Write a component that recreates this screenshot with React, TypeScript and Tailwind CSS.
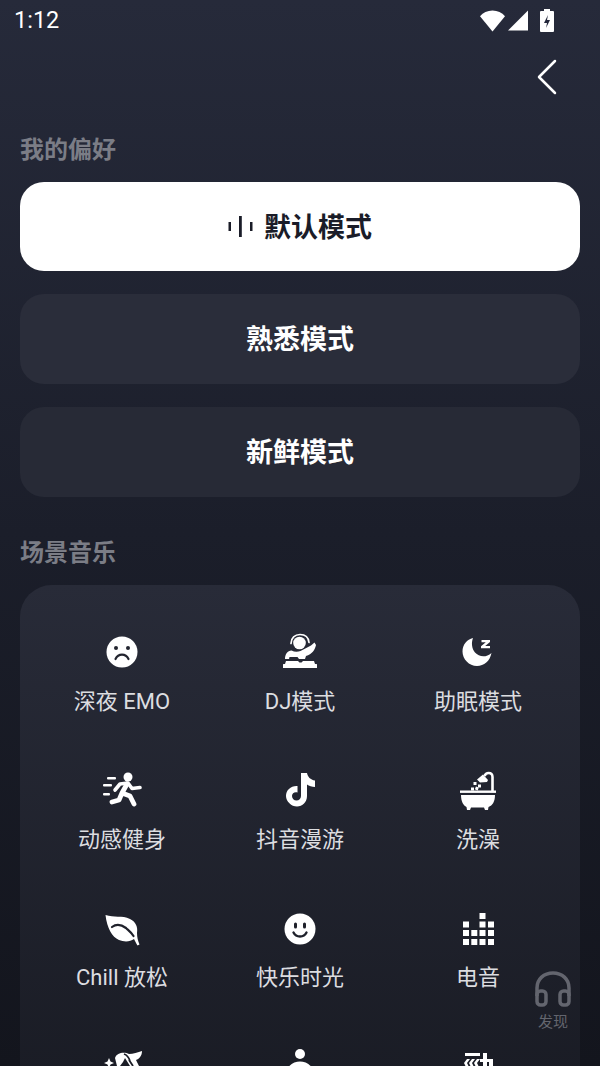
import type { ReactNode } from "react";

const cjk = "font-['Roboto','Noto_Sans_CJK_SC',sans-serif]";

function Sad() {
  return (
    <svg width="44" height="44" viewBox="0 0 44 44">
      <circle cx="22" cy="22" r="15.500" fill="#fff" />
      <circle cx="16" cy="18" r="2" fill="#22242f" />
      <circle cx="28" cy="18" r="2" fill="#22242f" />
      <path d="M15.500 29c1.500-3 4-4.300 6.500-4.300s5 1.300 6.500 4.300" fill="none" stroke="#22242f" strokeWidth="2.200" strokeLinecap="round" />
    </svg>
  );
}

function Dj() {
  return (
    <svg width="44" height="44" viewBox="0 0 44 44" fill="#fff">
      <path d="M13 13.500C13 8 17 4.500 22 4.500s8.500 3 9 8" fill="none" stroke="#fff" strokeWidth="1.700" strokeLinecap="round" />
      <circle cx="21.500" cy="13" r="6.300" />
      <path d="M7 29c0-5 2.500-8 6.500-8.500 3 1.500 6 1.500 9 .5L33 15.500l3.500-3 1.500 2.500c-1 5-4 9-10 11l-1 3h-6l-1.500-2h-8l-.5 2z" />
      <path d="M8 31h12l1.500 1.500h2L25 31h11l1 3H7z" />
      <rect x="5" y="34" width="34" height="4" rx=".5" />
    </svg>
  );
}

function Moon() {
  return (
    <svg width="44" height="44" viewBox="0 0 44 44" fill="#fff">
      <path d="M17 8C15 13 16 19 19 22.500 23 27 30 28 35.500 23 34 31 28 36 21 36 13 36 6.500 29 6.500 21.500 6.500 14.500 11 9.500 17 8z" />
      <path d="M25.500 10h8.500v2l-4.800 4h4.800v2.300h-9v-2l4.800-4h-4.300z" />
    </svg>
  );
}

function Runner() {
  return (
    <svg width="44" height="44" viewBox="0 0 44 44" fill="#fff">
      <circle cx="28" cy="9" r="4.500" />
      <path d="M15 22l5-6 8-1 4 5.500 8-1" fill="none" stroke="#fff" strokeWidth="3.600" strokeLinecap="round" strokeLinejoin="round" />
      <path d="M27 16l-5 9 8 3 4 8M22 25l-3 7-7 2" fill="none" stroke="#fff" strokeWidth="4.800" strokeLinecap="round" strokeLinejoin="round" />
      <rect x="7" y="9" width="9" height="2.500" rx="1" />
      <rect x="3" y="16" width="9" height="2.500" rx="1" />
      <rect x="3" y="25" width="7" height="2.500" rx="1" />
    </svg>
  );
}

function Tiktok() {
  return (
    <svg width="44" height="44" viewBox="0 0 44 44" fill="#fff">
      <path d="M23 5h6c.5 3.500 3.500 7 8 7.500V19c-3 0-6-1-8-2.500v11.500c0 6-4.500 10.500-10 10.500S8 33.500 8 28c0-6 5-10.500 11.500-10v6.500c-3-1-5.500 1-5.500 3.500 0 2.500 2 4.500 4.500 4.500S23 30.500 23 28z" />
    </svg>
  );
}

function Bath() {
  return (
    <svg width="44" height="44" viewBox="0 0 44 44" fill="#fff">
      <path d="M36.500 23V9c0-2.800-1.500-4-3.800-4-2 0-3.500 1-4.200 3" fill="none" stroke="#fff" strokeWidth="2.600" />
      <path d="M21 11.500l6-5 5 5.500-1 2-7 .5z" />
      <rect x="22" y="16.500" width="3" height="3" />
      <rect x="17.500" y="14" width="3" height="3" />
      <rect x="19.500" y="19" width="3" height="3" transform="rotate(20 21 20)" />
      <rect x="15" y="19.500" width="3" height="3" />
      <rect x="4" y="22.500" width="36" height="2.400" />
      <path d="M5 27h34c0 6.500-2.500 10.500-6.500 12l-.5 3h-3l-1-2.500H15L14 42h-3l-.5-3C7.500 37.500 5 33.500 5 27z" />
    </svg>
  );
}

function Leaf() {
  return (
    <svg width="44" height="44" viewBox="0 0 44 44">
      <path d="M5.500 9C14 12 22 9 30 13c6 3 8 8 7 14 0 4 1 8 2.500 11.500l-2 1c-1.500-2.500-2.500-4.500-3.500-6.500-4 3-10 3-15 1C12 31 7 22 5.500 9z" fill="#fff" />
      <path d="M12 21c5-4 10-2 14 1 2 2 5 4 7.500 8" fill="none" stroke="#1f212b" strokeWidth="2.200" strokeLinecap="round" />
    </svg>
  );
}

function Smile() {
  return (
    <svg width="44" height="44" viewBox="0 0 44 44">
      <circle cx="22" cy="23" r="15.500" fill="#fff" />
      <rect x="16" y="16.500" width="3" height="6" rx="1.500" fill="#1f212b" />
      <rect x="25" y="16.500" width="3" height="6" rx="1.500" fill="#1f212b" />
      <path d="M15.500 26.500c1.500 3 4 4 6.500 4s5-1 6.500-4" fill="none" stroke="#1f212b" strokeWidth="2.400" strokeLinecap="round" />
    </svg>
  );
}

function Equalizer() {
  const cells: [number, number][] = [
    [23.500, 7],
    [7, 15.500], [23.500, 15.500], [32, 15.500],
    [7, 24], [15.300, 24], [23.500, 24], [32, 24],
    [7, 33], [15.300, 33], [23.500, 33], [32, 33],
  ];
  return (
    <svg width="44" height="44" viewBox="0 0 44 44" fill="#fff">
      {cells.map(([x, y]) => (
        <rect key={`${x}-${y}`} x={x} y={y} width="6" height="6" />
      ))}
    </svg>
  );
}

function Fairy() {
  return (
    <svg width="44" height="44" viewBox="0 0 44 44">
      <path d="M9 14l1.500 3.500L14 19l-3.500 1.500L9 24l-1.500-3.500L4 19l3.500-1.500z" fill="#fff" />
      <path d="M15 14c2-6 10-6 14-4 4 0 9-2 13-3 0 5-3 8-6 9l3 6H30l-5-8-2 4-3 4h-3z" fill="#fff" />
      <path d="M24 10c3 1 5 4 6 7M29 16l4 6" fill="none" stroke="#1c1e27" strokeWidth="1.800" />
    </svg>
  );
}

function Person() {
  return (
    <svg width="44" height="44" viewBox="0 0 44 44" fill="#fff">
      <circle cx="22" cy="10" r="5" />
      <path d="M8 30c1-9 8-12.500 14-12.500S35 21 36 30z" />
    </svg>
  );
}

function Blend() {
  return (
    <svg width="44" height="44" viewBox="0 0 44 44" fill="#fff">
      <rect x="9" y="9" width="15" height="3" />
      <path d="M11 15h3l-3 4 2 4h-3l-2-4zM16 15h3l-3 4 2 4h-3l-2-4zM21 15h3l-3 4 2 4h-3l-2-4z" />
      <path d="M27 9h4v6h6v16h-4V18h-2v12h-4V18h-3v-3h3z" />
    </svg>
  );
}

function Cell({ icon, label }: { icon: ReactNode; label: string }) {
  return (
    <div className="flex h-[138px] flex-col items-center">
      {icon}
      <span className="mt-[13px] h-[30px] text-[22px] leading-[30px] text-[#dcdde0] whitespace-nowrap">{label}</span>
    </div>
  );
}

export default function App() {
  return (
    <div className={`relative h-[1066px] w-[600px] overflow-hidden bg-gradient-to-b from-[#262a3a] via-[#1b1e2a] via-50% to-[#13151d] ${cjk}`}>
      {/* status bar */}
      <div className="flex h-[37px] items-center justify-between pl-[14px] pr-[46px] pt-[4px] text-white">
        <span className="text-[23.500px] leading-none">1:12</span>
        <div className="flex items-center">
          <svg width="25" height="24" viewBox="0 0 24 22" fill="#fff">
            <path d="M12 21L0 6.500C3 3 7 1 12 1s9 2 12 5.500z" />
          </svg>
          <svg width="20" height="23" viewBox="0 0 20 22" fill="#fff" className="ml-[3px]">
            <path d="M20 1v20H0z" />
          </svg>
          <svg width="14" height="25" viewBox="0 0 14 23" className="ml-[12px]">
            <path d="M4 0h6v2h3a1 1 0 0 1 1 1v19a1 1 0 0 1-1 1H1a1 1 0 0 1-1-1V3a1 1 0 0 1 1-1h3z" fill="#fff" />
            <path d="M8 6l-4 8h3l-1 5 4-8H7z" fill="#22263a" />
          </svg>
        </div>
      </div>

      {/* back */}
      <div className="flex h-[97px] justify-end pr-[43px]">
        <svg width="20" height="36" viewBox="0 0 20 36" className="mt-[22px]" fill="none" stroke="#fff" strokeWidth="2.500" strokeLinecap="round" strokeLinejoin="round">
          <path d="M18 2L2 18l16 16" />
        </svg>
      </div>

      <div className="px-[20px]">
        <h2 className="text-[24px] font-bold leading-[32px] text-[#7b7d86]">我的偏好</h2>
        <div className="mt-[16px] flex flex-col gap-[23px]">
          <button className="flex h-[89px] w-full items-center justify-center gap-[11px] rounded-[24px] bg-white text-[#1a1c28]">
            <svg width="25" height="24" viewBox="0 0 25 24" fill="#1a1c28">
              <rect x="0.500" y="7" width="2.500" height="9" />
              <rect x="11" y="1" width="2.800" height="21" />
              <rect x="22" y="7" width="2.500" height="9" />
            </svg>
            <span className="pt-[3px] text-[27px] font-bold leading-none">默认模式</span>
          </button>
          <button className="flex h-[90px] w-full items-center justify-center rounded-[24px] bg-[#2a2d3a] text-white">
            <span className="pt-[3px] text-[27px] font-bold leading-none">熟悉模式</span>
          </button>
          <button className="flex h-[90px] w-full items-center justify-center rounded-[24px] bg-[#272a36] text-white">
            <span className="pt-[3px] text-[27px] font-bold leading-none">新鲜模式</span>
          </button>
        </div>

        <h2 className="mt-[40px] text-[24px] font-bold leading-[32px] text-[#7b7d86]">场景音乐</h2>
        <div className="mt-[16px] h-[600px] rounded-[32px] bg-gradient-to-b from-[#282b38] to-[#171921] pt-[45px]">
          <div className="grid grid-cols-3 px-[13px]">
            <Cell icon={<Sad />} label="深夜 EMO" />
            <Cell icon={<Dj />} label="DJ模式" />
            <Cell icon={<Moon />} label="助眠模式" />
            <Cell icon={<Runner />} label="动感健身" />
            <Cell icon={<Tiktok />} label="抖音漫游" />
            <Cell icon={<Bath />} label="洗澡" />
            <Cell icon={<Leaf />} label="Chill 放松" />
            <Cell icon={<Smile />} label="快乐时光" />
            <Cell icon={<Equalizer />} label="电音" />
            <Cell icon={<Fairy />} label="" />
            <Cell icon={<Person />} label="" />
            <Cell icon={<Blend />} label="" />
          </div>
        </div>
      </div>

      {/* floating discover */}
      <div className="absolute left-[524px] top-[970px] flex w-[58px] flex-col items-center">
        <svg width="38" height="38" viewBox="0 0 38 38" fill="none" stroke="#63656e" strokeWidth="3.500">
          <path d="M3 26v-8C3 9 10 3 19 3s16 6 16 15v8" />
          <rect x="3" y="21" width="9" height="14" rx="3.500" />
          <rect x="26" y="21" width="9" height="14" rx="3.500" />
        </svg>
        <span className="mt-[4px] text-[15px] leading-[20px] text-[#63656e]">发现</span>
      </div>
    </div>
  );
}
